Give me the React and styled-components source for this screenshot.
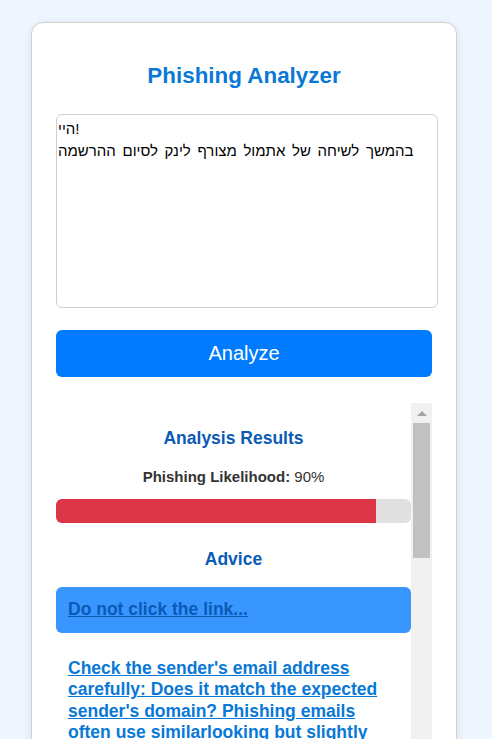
import React from 'react';
import styled, { createGlobalStyle } from 'styled-components';

const GlobalStyle = createGlobalStyle`
  html, body {
    margin: 0;
    padding: 0;
    background: #f0f6ff;
    font-family: "Liberation Sans", Arial, sans-serif;
    overflow: hidden;
  }
`;

const Page = styled.div`
  padding: 22px 35px 0 31px;
  height: 739px;
  box-sizing: border-box;
`;

const Card = styled.div`
  width: 426px;
  box-sizing: border-box;
  background: #fff;
  border: 1px solid #d0d0d0;
  border-radius: 12px;
  box-shadow: 0 2px 10px rgba(0, 0, 0, 0.1);
  padding: 0 24px 24px;
  height: 760px;
`;

const Title = styled.h1`
  margin: 0;
  padding: 40px 0 25px;
  text-align: center;
  color: #0a78d6;
  font-size: 22.4px;
  line-height: 26px;
  font-weight: bold;
`;

const Input = styled.textarea`
  display: block;
  height: 194px;
  box-sizing: border-box;
  width: 382px;
  margin: 0;
  padding: 3px 1px;
  border: 1px solid #cfcfcf;
  border-radius: 6px;
  font-family: "Liberation Sans", Arial, sans-serif;
  font-size: 15px;
  word-spacing: 2.5px;
  line-height: 22px;
  color: #000;
  resize: none;
  outline: none;
`;

const Button = styled.button`
  display: block;
  width: 100%;
  height: 47px;
  margin-top: 22px;
  border: none;
  border-radius: 6px;
  background: #007bff;
  color: #fff;
  font-family: "Liberation Sans", Arial, sans-serif;
  font-size: 20px;
  cursor: pointer;
`;

const Results = styled.div`
  margin-top: 26px;
  height: 400px;
  display: flex;
  overflow: hidden;
`;

const ResultsBody = styled.div`
  flex: 1;
  min-width: 0;
`;

const ScrollBar = styled.div`
  width: 21px;
  flex: none;
  background: #f1f1f1;
  display: flex;
  flex-direction: column;
  align-items: center;
`;

const ScrollArrow = styled.div`
  height: 20px;
  width: 100%;
  display: flex;
  align-items: center;
  justify-content: center;

  &::before {
    content: '';
    border-left: 5px solid transparent;
    border-right: 5px solid transparent;
    border-bottom: 5px solid #a3a3a3;
  }
`;

const ScrollThumb = styled.div`
  width: 17px;
  height: 135px;
  background: #c1c1c1;
`;

const SectionTitle = styled.h3`
  margin: 0;
  padding: ${p => p.$top}px 0 0;
  text-align: center;
  color: #0a5bb5;
  font-size: 17.5px;
  line-height: 22px;
  font-weight: bold;
`;

const Likelihood = styled.p`
  margin: 19px 0 0;
  text-align: center;
  font-size: 15px;
  line-height: 18px;
  color: #333;

  strong {
    font-weight: bold;
  }
`;

const Track = styled.div`
  margin-top: 13px;
  height: 24px;
  background: #e0e0e0;
  border-radius: 6px;
  overflow: hidden;
`;

const Fill = styled.div`
  height: 100%;
  background: #dc3545;
`;

const AdviceList = styled.ul`
  list-style: none;
  margin: 17px 0 0;
  padding: 0;
`;

const AdviceItem = styled.li`
  padding: 12px;
  margin-bottom: 13px;
  border-radius: 6px;
  background: ${p => (p.$active ? '#3a96ff' : '#fff')};

  a {
    font-size: 17.5px;
    line-height: 21.6px;
    font-weight: bold;
    text-decoration: underline;
    color: ${p => (p.$active ? '#0a5bb5' : '#0a78d6')};
  }
`;

const advice = [
  'Do not click the link...',
  "Check the sender's email address carefully: Does it match the expected sender's domain? Phishing emails often use similarlooking but slightly different domains to trick recipients.",
  'Hover over links before clicking them to see where they really lead.',
];

export default function App() {
  const likelihood = 90;
  return (
    <Page>
      <GlobalStyle />
      <Card>
        <Title>Phishing Analyzer</Title>
        <Input
          defaultValue={'היי!\nבהמשך לשיחה של אתמול מצורף לינק לסיום ההרשמה'}
        />
        <Button>Analyze</Button>
        <Results>
          <ResultsBody>
            <SectionTitle $top={24}>Analysis Results</SectionTitle>
            <Likelihood>
              <strong>Phishing Likelihood:</strong> {likelihood}%
            </Likelihood>
            <Track>
              <Fill style={{ width: `${likelihood}%` }} />
            </Track>
            <SectionTitle $top={25}>Advice</SectionTitle>
            <AdviceList>
              {advice.map((a, i) => (
                <AdviceItem key={i} $active={i === 0}>
                  <a href="#">{a}</a>
                </AdviceItem>
              ))}
            </AdviceList>
          </ResultsBody>
          <ScrollBar>
            <ScrollArrow />
            <ScrollThumb />
          </ScrollBar>
        </Results>
      </Card>
    </Page>
  );
}
